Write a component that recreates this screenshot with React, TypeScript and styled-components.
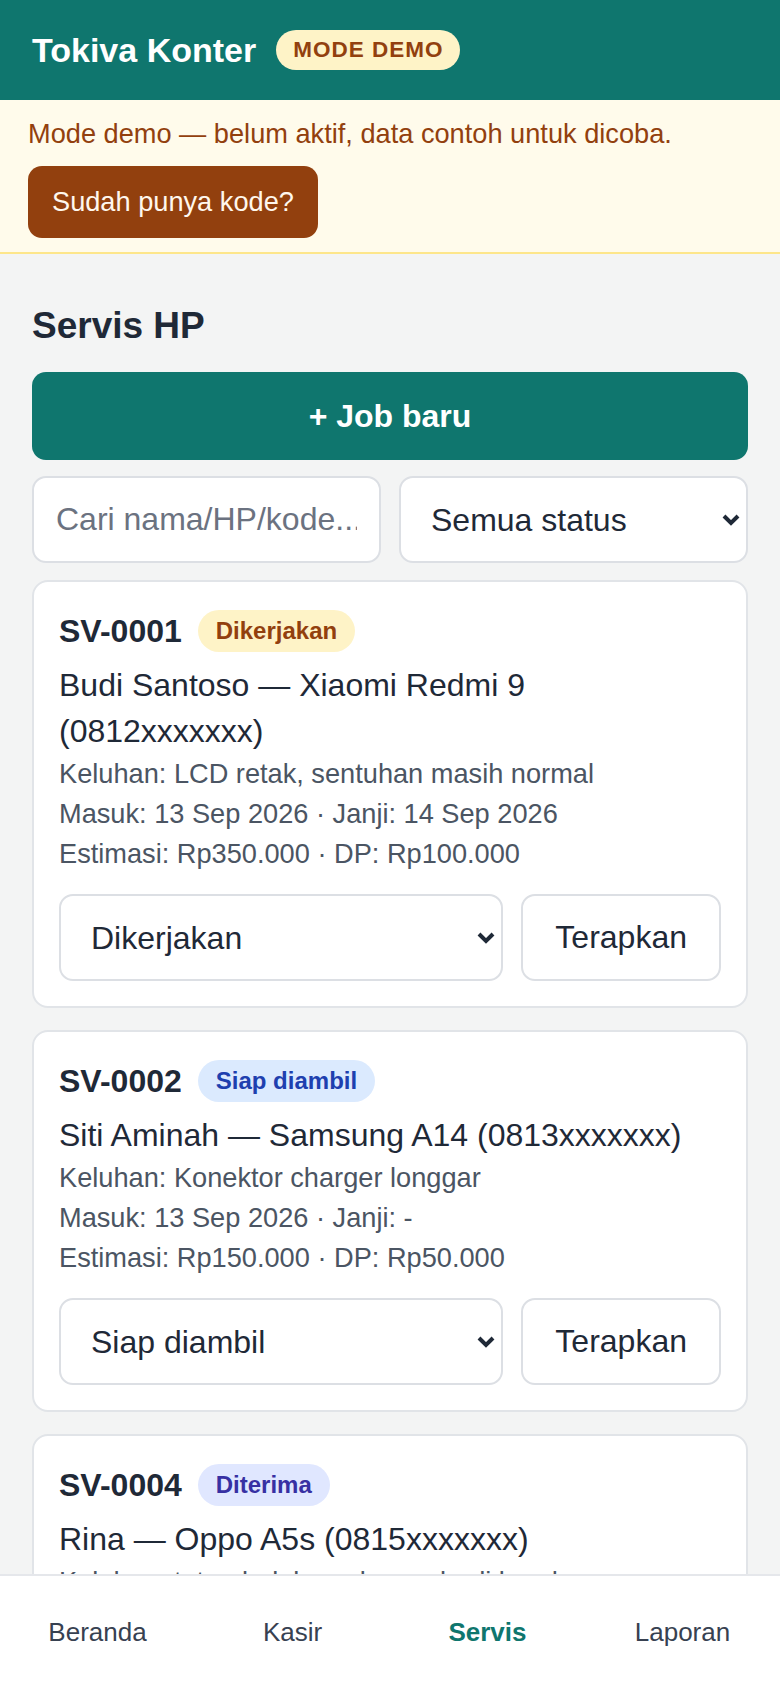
import React from 'react';
import styled, { createGlobalStyle } from 'styled-components';

const GlobalStyle = createGlobalStyle`
  * {
    box-sizing: border-box;
  }
  body {
    margin: 0;
    background: #f3f4f4;
    font-family: "Liberation Sans", Arial, sans-serif;
    color: #1f2937;
  }
`;

const teal = '#0f766e';
const brown = '#92400e';

const Header = styled.header`
  height: 100px;
  background: ${teal};
  display: flex;
  align-items: center;
  gap: 20px;
  padding: 0 32px;
`;

const Brand = styled.h1`
  margin: 0;
  font-size: 34px;
  font-weight: 700;
  color: #ffffff;
`;

const DemoPill = styled.span`
  height: 40px;
  padding: 0 17px;
  display: inline-flex;
  align-items: center;
  border-radius: 20px;
  background: #fef3c7;
  color: ${brown};
  font-size: 22.5px;
  font-weight: 700;
  letter-spacing: 1px;
`;

const Banner = styled.div`
  background: #fffbeb;
  border-bottom: 2px solid #fde68a;
  padding: 14px 28px;
  display: flex;
  flex-direction: column;
  align-items: flex-start;
  gap: 12px;
`;

const BannerText = styled.p`
  margin: 0;
  font-size: 27.2px;
  line-height: 40px;
  color: ${brown};
`;

const CodeButton = styled.button`
  height: 72px;
  padding: 0 24px;
  border: none;
  border-radius: 14px;
  background: ${brown};
  color: #fff7ed;
  font-family: inherit;
  font-size: 27.2px;
`;

const Main = styled.main`
  padding: 48px 32px 140px;
`;

const PageTitle = styled.h2`
  margin: 0 0 22px;
  font-size: 37px;
  line-height: 48px;
  font-weight: 700;
  color: #1f2937;
`;

const PrimaryButton = styled.button`
  width: 100%;
  height: 88px;
  border: none;
  border-radius: 14px;
  background: ${teal};
  color: #ffffff;
  font-family: inherit;
  font-size: 32px;
  font-weight: 700;
  margin-bottom: 16px;
`;

const FilterRow = styled.div`
  display: grid;
  grid-template-columns: 1fr 1fr;
  gap: 18px;
  margin-bottom: 17px;
`;

const SearchInput = styled.input`
  width: 100%;
  height: 87px;
  padding: 0 22px;
  border: 2px solid #dcdfe4;
  border-radius: 14px;
  background: #ffffff;
  font-family: inherit;
  font-size: 32px;
  color: #1f2937;
  &::placeholder {
    color: #6b7280;
  }
`;

const SelectWrap = styled.div<{ $grow?: boolean }>`
  position: relative;
  flex: ${(p) => (p.$grow ? 1 : 'none')};
`;

const Select = styled.select`
  width: 100%;
  height: 87px;
  padding: 0 40px 0 30px;
  border: 2px solid #dcdfe4;
  border-radius: 14px;
  background: #ffffff;
  font-family: inherit;
  font-size: 32px;
  color: #1f2937;
  appearance: none;
  -webkit-appearance: none;
`;

const Chevron = styled.svg`
  position: absolute;
  right: 7px;
  top: 50%;
  margin-top: -7px;
  width: 20px;
  height: 14px;
  pointer-events: none;
`;

const CardList = styled.div`
  display: flex;
  flex-direction: column;
  gap: 22px;
`;

const Card = styled.section`
  background: #ffffff;
  border: 2px solid #e1e4e8;
  border-radius: 16px;
  padding: 28px 25px 25px;
`;

const CardHead = styled.div`
  height: 42px;
  display: flex;
  align-items: center;
  gap: 16px;
`;

const JobCode = styled.span`
  font-size: 32px;
  font-weight: 700;
  color: #1f2937;
`;

const statusColors: Record<string, { bg: string; fg: string }> = {
  Dikerjakan: { bg: '#fef3c7', fg: '#92400e' },
  'Siap diambil': { bg: '#dbeafe', fg: '#1e40af' },
  Diterima: { bg: '#e0e7ff', fg: '#3730a3' },
};

const StatusBadge = styled.span<{ $bg: string; $fg: string }>`
  height: 42px;
  padding: 0 18px;
  display: inline-flex;
  align-items: center;
  border-radius: 21px;
  background: ${(p) => p.$bg};
  color: ${(p) => p.$fg};
  font-size: 24px;
  font-weight: 700;
`;

const Customer = styled.div`
  margin-top: 10px;
  font-size: 32px;
  line-height: 46px;
  color: #1f2937;
`;

const Detail = styled.div`
  font-size: 27.2px;
  line-height: 40px;
  color: #4b5563;
`;

const Actions = styled.div`
  margin-top: 20px;
  display: flex;
  gap: 18px;
`;

const GhostButton = styled.button`
  height: 87px;
  padding: 0 32px;
  border: 2px solid #dcdfe4;
  border-radius: 14px;
  background: #ffffff;
  font-family: inherit;
  font-size: 32px;
  color: #1f2937;
`;

const BottomNav = styled.nav`
  position: fixed;
  left: 0;
  right: 0;
  bottom: 0;
  height: 114px;
  background: #ffffff;
  border-top: 2px solid #e5e7eb;
  display: grid;
  grid-template-columns: repeat(4, 1fr);
  align-items: center;
`;

const NavItem = styled.a<{ $active?: boolean }>`
  text-align: center;
  font-size: 26px;
  font-weight: ${(p) => (p.$active ? 700 : 400)};
  color: ${(p) => (p.$active ? teal : '#374151')};
  text-decoration: none;
`;

const statuses = ['Diterima', 'Dikerjakan', 'Siap diambil', 'Selesai', 'Batal'];

interface Job {
  code: string;
  status: string;
  customer: string;
  complaint: string;
  dates: string;
  money: string;
}

const jobs: Job[] = [
  {
    code: 'SV-0001',
    status: 'Dikerjakan',
    customer: 'Budi Santoso — Xiaomi Redmi 9 (0812xxxxxxx)',
    complaint: 'Keluhan: LCD retak, sentuhan masih normal',
    dates: 'Masuk: 13 Sep 2026 · Janji: 14 Sep 2026',
    money: 'Estimasi: Rp350.000 · DP: Rp100.000',
  },
  {
    code: 'SV-0002',
    status: 'Siap diambil',
    customer: 'Siti Aminah — Samsung A14 (0813xxxxxxx)',
    complaint: 'Keluhan: Konektor charger longgar',
    dates: 'Masuk: 13 Sep 2026 · Janji: -',
    money: 'Estimasi: Rp150.000 · DP: Rp50.000',
  },
  {
    code: 'SV-0004',
    status: 'Diterima',
    customer: 'Rina — Oppo A5s (0815xxxxxxx)',
    complaint: 'Keluhan: tutup belakang lepas, bodi kendur',
    dates: 'Masuk: 14 Sep 2026 · Janji: -',
    money: 'Estimasi: Rp0 · DP: Rp0',
  },
];

function ChevronIcon() {
  return (
    <Chevron viewBox="0 0 20 14">
      <path d="M3 3 L10 10 L17 3" fill="none" stroke="#1f2937" strokeWidth="4" />
    </Chevron>
  );
}

function JobCard({ job }: { job: Job }) {
  const colors = statusColors[job.status];
  return (
    <Card>
      <CardHead>
        <JobCode>{job.code}</JobCode>
        <StatusBadge $bg={colors.bg} $fg={colors.fg}>
          {job.status}
        </StatusBadge>
      </CardHead>
      <Customer>{job.customer}</Customer>
      <Detail>{job.complaint}</Detail>
      <Detail>{job.dates}</Detail>
      <Detail>{job.money}</Detail>
      <Actions>
        <SelectWrap $grow>
          <Select defaultValue={job.status}>
            {statuses.map((s) => (
              <option key={s}>{s}</option>
            ))}
          </Select>
          <ChevronIcon />
        </SelectWrap>
        <GhostButton>Terapkan</GhostButton>
      </Actions>
    </Card>
  );
}

export default function App() {
  return (
    <>
      <GlobalStyle />
      <Header>
        <Brand>Tokiva Konter</Brand>
        <DemoPill>MODE DEMO</DemoPill>
      </Header>
      <Banner>
        <BannerText>Mode demo — belum aktif, data contoh untuk dicoba.</BannerText>
        <CodeButton>Sudah punya kode?</CodeButton>
      </Banner>
      <Main>
        <PageTitle>Servis HP</PageTitle>
        <PrimaryButton>+ Job baru</PrimaryButton>
        <FilterRow>
          <SearchInput placeholder="Cari nama/HP/kode..." />
          <SelectWrap>
            <Select defaultValue="Semua status">
              <option>Semua status</option>
              {statuses.map((s) => (
                <option key={s}>{s}</option>
              ))}
            </Select>
            <ChevronIcon />
          </SelectWrap>
        </FilterRow>
        <CardList>
          {jobs.map((job) => (
            <JobCard key={job.code} job={job} />
          ))}
        </CardList>
      </Main>
      <BottomNav>
        <NavItem>Beranda</NavItem>
        <NavItem>Kasir</NavItem>
        <NavItem $active>Servis</NavItem>
        <NavItem>Laporan</NavItem>
      </BottomNav>
    </>
  );
}
